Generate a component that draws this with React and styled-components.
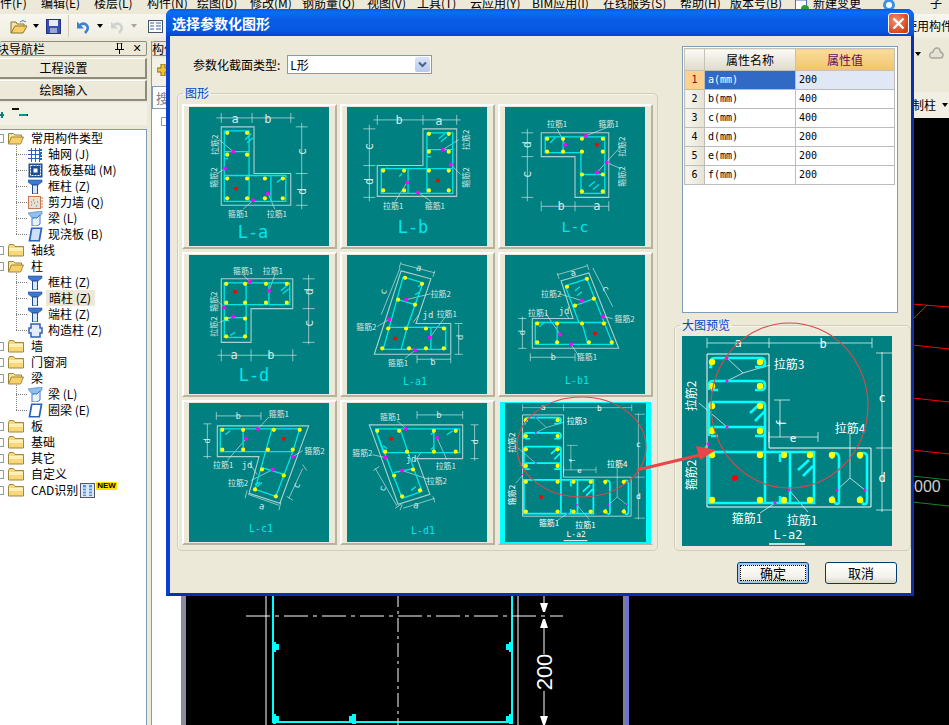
import React from "react";
import styled, { createGlobalStyle } from "styled-components";

const GlobalStyle = createGlobalStyle`
  html, body { margin: 0; padding: 0; background: #000; }
  * { box-sizing: border-box; }
`;

const cjk = `"Noto Sans CJK SC", sans-serif`;
const mono = `"DejaVu Sans Mono", "Noto Sans CJK SC", monospace`;

const Page = styled.div`
  position: relative;
  width: 949px;
  height: 725px;
  overflow: hidden;
  display: flex;
  flex-direction: column;
  background: #ece9d8;
  font: 12px/16px ${cjk};
  color: #000;
`;

/* ---------- application behind the dialog ---------- */

const MenuBar = styled.div`
  height: 14px;
  display: flex;
  overflow: hidden;
  align-items: flex-start;
  white-space: nowrap;
`;
const MenuItem = styled.span`
  flex: none;
  width: ${p => p.$w}px;
  margin-top: -5px;
`;
const MenuGlyph = styled.svg`
  margin-top: 5px;
`;
const Toolbar = styled.div`
  height: 27px;
  display: flex;
  align-items: center;
  padding: 0 0 3px 10px;
  background: linear-gradient(#f7f6ef, #f1efe3 85%, #ece9d8 90%);
`;
const ToolIcon = styled.svg`
  flex: none;
  margin-right: ${p => p.$gap || 0}px;
`;
const ToolSep = styled.i`
  width: 1px;
  height: 22px;
  background: #cfccb8;
  margin: 0 8px 0 7px;
`;
const Caret = styled.i`
  flex: none;
  width: 0;
  height: 0;
  border: 3px solid transparent;
  border-top: 4px solid ${p => p.$color || "#000"};
  border-bottom: 0;
  margin-right: ${p => p.$gap || 0}px;
`;
const ToolEnd = styled.span`
  margin-left: auto;
  margin-right: -4px;
`;
const Main = styled.div`
  flex: 1;
  display: flex;
  min-height: 0;
`;
const Nav = styled.div`
  width: 147px;
  display: flex;
  flex-direction: column;
`;
const PanelTitle = styled.div`
  height: 15px;
  display: flex;
  align-items: center;
  overflow: hidden;
  border: 1px solid #8d8b7c;
  border-left: 0;
  border-radius: 2px;
  background: #ece9d8;
  font-size: 12px;
  white-space: nowrap;
`;
const TitleText = styled.span`
  margin-left: -15px;
  flex: 1;
`;
const PinBox = styled.span`
  width: 18px;
  display: flex;
  justify-content: center;
  font: 14px/13px "Liberation Sans", sans-serif;
`;
const NavButton = styled.div`
  height: 21px;
  margin-top: ${p => p.$top}px;
  padding-right: 18px;
  border: 1px solid #8d8b7c;
  border-width: 1px 2px 2px 0;
  border-color: #fff #8d8b7c #8d8b7c #fff;
  background: #ece9d8;
  text-align: center;
  font-size: 12px;
  line-height: 18px;
`;
const TreeTools = styled.div`
  height: 22px;
  margin-top: 2px;
  display: flex;
  align-items: center;
  background: #f3f1e6;
`;
const Tree = styled.div`
  flex: 1;
  margin-top: 4px;
  background: #fff;
  border: 1px solid #7f9db9;
  border-left: 0;
  border-bottom: 0;
`;
const Row = styled.div`
  position: relative;
  height: 16px;
  display: flex;
  align-items: center;
  white-space: nowrap;
  padding-left: ${p => (p.$child ? 12 : 0)}px;
  &::before {
    content: ${p => (p.$child ? '""' : "none")};
    position: absolute;
    left: 0;
    top: 8px;
    width: 11px;
    border-top: 1px dotted #808080;
  }
`;
const Expander = styled.i`
  flex: none;
  width: 9px;
  height: 9px;
  margin: 0 4px 0 -5px;
  border: 1px solid #919b9c;
  background: #fff;
`;
const RowLabel = styled.span`
  margin-left: ${p => (p.$child ? 3 : 5)}px;
  padding: 0 ${p => (p.$selected ? 3 : 2)}px;
  width: ${p => (p.$selected ? "49px" : "auto")};
  background: ${p => (p.$selected ? "#ece9d8" : "transparent")};
`;
const Children = styled.div`
  position: relative;
  margin-left: 16px;
  &::before {
    content: "";
    position: absolute;
    left: 0;
    top: -1px;
    bottom: 8px;
    border-left: 1px dotted #808080;
  }
`;
const NewBadge = styled.span`
  margin: -9px 0 0 1px;
  height: 8px;
  padding: 0 1px;
  background: #ffe100;
  color: #000;
  font: bold 8px/8px "Liberation Sans", sans-serif;
`;
const Splitter = styled.div`
  width: 5px;
  background: #ece9d8;
  border-right: 1px solid #7f9db9;
`;
const Mid = styled.div`
  width: 29px;
  display: flex;
  flex-direction: column;
`;
const MidTop = styled.div`
  height: 28px;
  margin-top: 2px;
  padding: 5px 0 0 5px;
  background: #f3f1e6;
`;
const MidSearch = styled.div`
  height: 23px;
  border: 1px solid #7f9db9;
  background: #fff;
  color: #808080;
  padding-left: 3px;
  font-size: 13px;
  line-height: 21px;
`;
const MidTree = styled.div`
  flex: 1;
  padding: 8px 0 0 9px;
  background: #fff;
`;
const MidExpander = styled.i`
  display: block;
  width: 9px;
  height: 9px;
  border: 1px solid #919b9c;
`;
const Work = styled.div`
  flex: 1;
  display: flex;
  flex-direction: column;
  min-width: 0;
`;
const WorkRow = styled.div`
  height: ${p => p.$h}px;
  display: flex;
  align-items: center;
  justify-content: flex-end;
  background: ${p => p.$bg || "#ece9d8"};
`;
const WorkText = styled.span`
  font-size: 12px;
  margin-right: 6px;
`;
const Canvas = styled.div`
  flex: 1;
  display: flex;
  background: #000;
  border-left: 5px solid;
  border-image: linear-gradient(90deg, #8a8aa0, #6a74d0) 1;
`;
const CadSvg = styled.svg`
  display: block;
  width: 763px;
  height: 607px;
`;

/* ---------- dialog ---------- */

const Dialog = styled.div`
  position: absolute;
  left: 166px;
  top: 9px;
  width: 748px;
  height: 587px;
  display: flex;
  flex-direction: column;
  border-radius: 7px 7px 0 0;
  background: #0a4fdc;
  border: solid #0b3fd0;
  border-width: 0 3px 3px 4px;
  border-bottom-color: #0a2fa8;
  border-right-color: #0a2fa8;
`;
const TitleBar = styled.div`
  height: 27px;
  margin: 0 -3px 0 -4px;
  padding: 1px 5px 0 6px;
  display: flex;
  align-items: center;
  justify-content: space-between;
  border-radius: 7px 7px 0 0;
  background: linear-gradient(#0a58e8, #0b6cf6 12%, #0a5ce6 40%, #0658e2 80%, #0346c8);
  color: #fff;
  font: bold 14px/18px ${cjk};
`;
const CloseButton = styled.div`
  width: 21px;
  height: 21px;
  display: flex;
  align-items: center;
  justify-content: center;
  border: 1px solid #fff;
  border-radius: 3px;
  background: radial-gradient(circle at 35% 35%, #f09070, #d8481c 70%, #c03a10);
`;
const Client = styled.div`
  flex: 1;
  display: grid;
  grid-template-columns: 481px 237px;
  grid-template-rows: 505px 1fr;
  column-gap: 16px;
  padding: 10px 0 0 7px;
  background: #ece9d8;
`;
const Column = styled.div`
  display: flex;
  flex-direction: column;
  min-width: 0;
`;
const TypeRow = styled.div`
  height: 19px;
  margin-top: 9px;
  padding-left: 16px;
  display: flex;
  align-items: center;
  gap: 7px;
`;
const Combo = styled.div`
  width: 145px;
  height: 19px;
  display: flex;
  align-items: center;
  justify-content: space-between;
  padding: 1px 1px 1px 2px;
  border: 1px solid #7f9db9;
  background: #fff;
`;
const ComboArrow = styled.span`
  width: 15px;
  height: 15px;
  display: flex;
  align-items: center;
  justify-content: center;
  border-radius: 2px;
  background: linear-gradient(#dbe5fb, #b6c8ef);
`;
const Group = styled.fieldset`
  margin: ${p => p.$top}px 0 0;
  height: ${p => p.$h}px;
  min-width: 0;
  padding: 5px 0 0 ${p => p.$left}px;
  border: 1px solid #d0cebb;
  border-radius: 5px;
  box-shadow: inset 1px 1px 0 #f6f5ee;
`;
const GroupTitle = styled.legend`
  margin-left: ${p => p.$indent}px;
  padding: 0 2px;
  font-size: 12px;
  line-height: 12px;
  color: #0046d5;
`;
const TileGrid = styled.div`
  display: grid;
  grid-template-columns: repeat(3, 155px);
  grid-auto-rows: 145px;
  gap: 3px;
`;
const Tile = styled.div`
  padding: 1px 0 0 5px;
  background: ${p => (p.$selected ? "#00ffff" : "#ece9d8")};
  border: 2px solid;
  border-color: ${p =>
    p.$selected ? "#ece9d8 #ece9d8 #b5b29e #ece9d8" : "#fff #b5b29e #b5b29e #fff"};
`;
const Art = styled.svg`
  display: block;
  width: ${p => p.$w}px;
  height: ${p => p.$h}px;
  background: #008080;
`;
const PropsBox = styled.div`
  height: 267px;
  width: 216px;
  margin-left: 8px;
  padding: 1px 3px 0 1px;
  border: 1px solid #7f9db9;
  background: #fff;
`;
const PropsTable = styled.table`
  width: 210px;
  table-layout: fixed;
  border-collapse: collapse;
  font: 10px/16px ${mono};
`;
const HeadCell = styled.th`
  height: 22px;
  padding: 0;
  font: 12px/20px ${cjk};
  border: 1px solid #c4c2b4;
  color: ${p => (p.$accent ? "#660a66" : "#000")};
  background: ${p =>
    p.$accent
      ? "linear-gradient(#f9dc9c, #f1c46c)"
      : "linear-gradient(#fbfaf5, #dfdccb)"};
`;
const NumCell = styled.td`
  height: 19px;
  padding: 0;
  text-align: center;
  border: 1px solid #bcbcbc;
  color: ${p => (p.$active ? "#7a1010" : "#000")};
  background: ${p =>
    p.$active ? "#fdd08e" : "linear-gradient(90deg, #f8f7f0, #e6e3d3)"};
`;
const Cell = styled.td`
  height: 19px;
  padding: 0 0 0 3px;
  border: 1px solid #bcbcbc;
  color: ${p => (p.$fill === "#316ac5" ? "#fff" : "#000")};
  background: ${p => p.$fill || "#fff"};
`;
const Footer = styled.div`
  grid-column: 1 / 3;
  padding: 11px 14px 0 0;
  display: flex;
  justify-content: flex-end;
  gap: 16px;
`;
const Button = styled.div`
  position: relative;
  width: 72px;
  height: 22px;
  text-align: center;
  font-size: 13px;
  line-height: 20px;
  border: 1px solid #003c74;
  border-radius: 3px;
  background: linear-gradient(#ffffff, #f3f2ea 70%, #dcd8c8);
  box-shadow: ${p => (p.$primary ? "inset 0 0 0 2px #a9c4ea" : "none")};
  &::after {
    content: ${p => (p.$primary ? '""' : "none")};
    position: absolute;
    inset: 2px;
    border: 1px dotted #000;
  }
`;
const Overlay = styled.svg`
  position: absolute;
  left: 0;
  top: 0;
  width: 949px;
  height: 725px;
  pointer-events: none;
`;

/* ---------- small drawings ---------- */

const FolderClosed = () => (
  <svg width="16" height="14" viewBox="0 0 16 14">
    <path d="M.5 3.5v9.5h15V3.5H7L5.5 1.5h-4z" fill="#f8d878" stroke="#a08838" />
    <path d="M1 5h14v3H1z" fill="#fff0b8" />
  </svg>
);
const FolderOpen = () => (
  <svg width="16" height="14" viewBox="0 0 16 14">
    <path d="M.5 13V2.5h5L7 4h6.5v2" fill="#f6e2a0" stroke="#9a8438" />
    <path d="M.5 13l3-7H15.5l-3 7z" fill="#f8cf68" stroke="#a08838" />
  </svg>
);
const GridIcon = () => (
  <svg width="15" height="15" viewBox="0 0 15 15" fill="none" stroke="#2f62b4">
    <path d="M0 3.5h13M0 7.5h13M0 11.5h13M3.5 1v14M7.5 1v14M11.5 1v14" />
    <path d="M13 2v12" stroke="#2f62b4" strokeDasharray="2 1" strokeWidth="2" />
  </svg>
);
const RaftIcon = () => (
  <svg width="15" height="15" viewBox="0 0 15 15" fill="none">
    <rect x=".5" y=".5" width="14" height="14" fill="#1c4f96" />
    <rect x="2.5" y="2.5" width="10" height="10" stroke="#fff" strokeDasharray="2 1" />
    <rect x="5" y="5" width="5" height="5" fill="#fff" stroke="#1c4f96" />
  </svg>
);
const ColumnIcon = () => (
  <svg width="15" height="15" viewBox="0 0 15 15">
    <path d="M0 1h14v2l-4 3H4L0 3z" fill="#3d78d0" stroke="#1f4a98" strokeWidth=".6" />
    <path d="M4.5 6h5v9h-5z" fill="#dbe8fa" stroke="#1f4a98" />
  </svg>
);
const WallIcon = () => (
  <svg width="15" height="13" viewBox="0 0 15 13">
    <rect x=".5" y=".5" width="12" height="12" fill="#e4e0d4" stroke="#c87850" />
    <path d="M3 9h1M6 7h1M8 10h1M5 4h1M9 6h1M3 6h1" stroke="#777" />
    <path d="M14 1v11" stroke="#d07030" strokeDasharray="2 1" />
  </svg>
);
const BeamIcon = () => (
  <svg width="15" height="15" viewBox="0 0 15 15">
    <path d="M0 2l14-2v3L9 7H4z" fill="#8fc0ec" stroke="#3f78c0" strokeWidth=".6" />
    <path d="M4 7h5l3-3v9l-3 2H4z" fill="#e8f2fc" stroke="#3f78c0" />
  </svg>
);
const SlabIcon = ({ hollow }) => (
  <svg width="15" height="15" viewBox="0 0 15 15">
    <path d="M3 .5h11.5L12 14.5H.5z" fill="#2a62b8" />
    <path d="M4.5 2h8L10.5 13H2.5z" fill={hollow ? "#fff" : "#cfe0f6"} />
  </svg>
);
const ConstructIcon = () => (
  <svg width="15" height="15" viewBox="0 0 15 15">
    <path d="M3 1h9v4h2v5h-2v4H3v-4H1V5h2z" fill="#e4eefb" stroke="#2f62b4" strokeWidth="1.5" />
  </svg>
);
const CadIcon = () => (
  <svg width="15" height="15" viewBox="0 0 15 15" fill="none">
    <rect x=".5" y=".5" width="14" height="14" fill="#d8e8fb" stroke="#556" />
    <path d="M3 2v11h3V2zM9 2v11h3V2z" fill="#4f8fe0" />
    <path d="M3 5h3M3 8h3M3 11h3M9 5h3M9 8h3M9 11h3" stroke="#fff" />
  </svg>
);

const ICONS = {
  grid: <GridIcon />,
  raft: <RaftIcon />,
  column: <ColumnIcon />,
  wall: <WallIcon />,
  beam: <BeamIcon />,
  slab: <SlabIcon />,
  ring: <SlabIcon hollow />,
  construct: <ConstructIcon />,
};

const TREE = [
  { label: "常用构件类型", open: true, kids: [
    ["grid", "轴网 (J)"], ["raft", "筏板基础 (M)"], ["column", "框柱 (Z)"],
    ["wall", "剪力墙 (Q)"], ["beam", "梁 (L)"], ["slab", "现浇板 (B)"],
  ] },
  { label: "轴线" },
  { label: "柱", open: true, kids: [
    ["column", "框柱 (Z)"], ["column", "暗柱 (Z)", true], ["column", "端柱 (Z)"], ["construct", "构造柱 (Z)"],
  ] },
  { label: "墙" },
  { label: "门窗洞" },
  { label: "梁", open: true, kids: [["beam", "梁 (L)"], ["ring", "圈梁 (E)"]] },
  { label: "板" },
  { label: "基础" },
  { label: "其它" },
  { label: "自定义" },
  { label: "CAD识别", cad: true },
];

const MENU = [
  ["件(F)", 41], ["编辑(E)", 53], ["楼层(L)", 53], ["构件(N)", 50], ["绘图(D)", 53],
  ["修改(M)", 52], ["钢筋量(Q)", 65], ["视图(V)", 50], ["工具(T)", 53], ["云应用(Y)", 62],
  ["BIM应用(I)", 71], ["在线服务(S)", 77], ["帮助(H)", 50], ["版本号(B)", 65],
];

const PROPS = [["a", 200], ["b", 400], ["c", 400], ["d", 200], ["e", 200], ["f", 200]];

/* ---------- section diagrams, in each drawing's own coordinates ---------- */

const TILES = [
  {
    title: ["L-a", 64, 126, 17],
    outline: "32,20 65,20 65,67 102,67 102,99 32,99",
    rebar: "M35 24H60V95H35ZM35 45H60M35 69H97V95H60M82 69V95M56 33l6-6M58 36l6-5M88 76l6-5M35 52h4",
    dims: "M27 11H106M32 6V16M63 6V16M102 6V16M113 16V103M107 20H119M107 67H119M107 99H119M44 45L30 33M36 62L28 67M64 94L54 103M79 87L86 103",
    dots: [[38,26],[58,26],[38,48],[58,48],[38,72],[58,72],[76,72],[94,72],[38,92],[58,92],[76,92],[94,92]],
    pink: [[44,45],[36,62],[64,94],[79,87]],
    red: [47,82],
    labels: [["a",46,12,0,12],["b",79,12,0,12],["c",113,45,-90,12],["d",113,85,-90,12],["拉筋2",25,38,-90],["箍筋2",24,71,-90],["箍筋1",49,107],["拉筋1",88,107]],
  },
  {
    title: ["L-b", 66, 121, 17],
    outline: "30,59 76,59 76,22 110,22 110,90 30,90",
    rebar: "M80 26H106V87H34V62H106M80 26V87M61 62V87M80 43H106M92 32l6-5M94 35l6-5M80 50h4M55 67l-3 3M40 62v-1",
    dims: "M26 13H114M30 8V18M76 8V18M110 8V18M22 18V95M16 22H28M16 59H28M16 91H28M96 43L112 33M104 58L114 68M60 76L48 95M71 86L84 95",
    dots: [[36,64],[57,64],[36,84],[57,84],[82,27],[102,27],[82,45],[102,45],[82,64],[102,64],[82,84],[102,84]],
    pink: [[96,43],[104,58],[60,76],[71,86]],
    red: [91,74],
    labels: [["b",52,13,0,12],["a",92,14,0,12],["c",22,40,-90,12],["d",22,75,-90,12],["拉筋2",119,33,-90],["箍筋2",119,71,-90],["拉筋1",46,99],["箍筋1",88,99]],
  },
  {
    title: ["L-c", 70, 121, 15],
    outline: "36,26 104,26 104,91 70,91 70,50 36,50",
    rebar: "M40 30H100V87H76V46H40ZM58 30V46M76 68H100M45 36l5-5M84 80l6-5M88 83l6-5",
    dims: "M22 22V95M16 26H28M16 50H28M16 91H28M36 100H104M36 95V105M70 95V105M104 95V105M60 38L52 22M81 29L104 20M102 56L116 62M92 66L116 40",
    dots: [[42,32],[58,32],[77,32],[98,32],[42,45],[58,45],[77,45],[98,45],[77,68],[98,68],[77,85],[98,85]],
    pink: [[60,38],[81,29],[102,56],[92,66]],
    red: [92,38],
    labels: [["拉筋1",52,17],["箍筋1",104,17],["拉筋2",117,40,-90],["箍筋2",117,70,-90],["d",22,38,-90,12],["c",22,68,-90,12],["b",56,100,0,12],["a",92,100,0,12]],
  },
  {
    title: ["L-d", 65, 121, 17],
    outline: "32,24 104,24 104,54 62,54 62,88 32,88",
    rebar: "M35 28H101V50H35ZM35 50V83H57V28M80 28V50M35 63H57M92 36l6-5M94 39l6-5M41 81l5-3M35 66h5",
    dims: "M28 101H108M32 95V107M62 95V107M104 95V107M120 20V90M114 24H126M114 54H126M114 88H126M61 27L54 20M80 36L86 20M35 53L28 46M44 62L30 68",
    dots: [[37,29],[56,29],[77,29],[98,29],[37,48],[56,48],[77,48],[98,48],[37,64],[56,64],[37,82],[56,82]],
    pink: [[61,27],[80,36],[35,53],[44,62]],
    red: [46,37],
    labels: [["箍筋1",54,16],["拉筋1",84,16],["箍筋2",24,47,-90],["拉筋2",24,72,-90],["a",45,101,0,12],["b",82,101,0,12],["d",120,37,-90,12],["c",120,69,-90,12]],
  },
  {
    title: ["L-a1", 68, 127, 10],
    outline: "54,16 84,24 69,69 104,69 104,100 27,100",
    rebar: "M56 22L76 28L60 73H99V95H36L56 22M51 45L68 50M60 73L54 95M84 73V95M41 73H60M71 32l6-4M68 40l5-3",
    dims: "M54 9L88 18M54 7L52 13M88 16L86 22M34 60L53 13M112 70V100M108 69H116M108 100H116M70 105H104M70 101V109M104 101V109M59 45L84 39M42 65L30 72M83 83L98 63M68 96L58 104M66 68L72 60",
    dots: [[58,23],[75,29],[51,45],[68,50],[41,74],[59,74],[79,74],[97,74],[35,94],[62,94],[79,94],[97,94]],
    pink: [[59,45],[42,65],[83,83],[68,96]],
    red: [48,84],
    labels: [["a",72,13,15,9],["c",36,37,-75,9],["拉筋2",94,39],["jd",81,60,0,9],["拉筋1",100,59],["箍筋2",19,72],["d",113,83,-90,9],["箍筋1",51,108],["b",86,108,0,9]],
  },
  {
    title: ["L-b1", 72, 126, 10],
    outline: "56,26 84,18 114,94 27,94 27,64 68,64",
    rebar: "M60 31L82 24L108 90H30V68H102M60 31L74 68M70 51L89 44M52 68V90M77 68L83 90M70 36l5-4M72 41l5-4M34 72l5-4",
    dims: "M52 20L82 11M52 18L54 24M82 9L84 15M88 13L108 52M17 62V94M13 64H21M13 94H21M25 103H70M25 99V107M70 99V107M54 39L77 46M40 58L55 80M66 90L74 102M98 62L108 64M60 58L64 64",
    dots: [[62,32],[82,24],[70,51],[89,44],[32,69],[52,69],[77,69],[99,69],[32,88],[52,88],[84,88],[107,88]],
    pink: [[77,46],[98,62],[55,80],[66,90]],
    red: [90,79],
    labels: [["a",68,18,-15,9],["c",101,34,65,9],["拉筋2",46,39],["jd",59,56,0,9],["拉筋1",33,58],["箍筋2",120,64],["d",17,78,-90,9],["b",48,103,0,9],["箍筋1",82,102]],
  },
  {
    title: ["L-c1", 72, 126, 10],
    outline: "28,23 120,23 91,101 60,91 70,54 28,54",
    rebar: "M31 26H111L104 49H31ZM104 49L87 94M83 26L66 87L87 94M73 65L95 72M54 26V49M36 32l5-4M68 84l5-4M66 82l5-2",
    dims: "M27 13H72M27 9V17M72 9V17M18 21V56M14 21H22M14 54H22M59 92L90 103M58 88L56 96M92 100L90 108M114 66L100 96M114 62L118 68M98 94L104 98M57 36L38 58M69 26L80 14M104 54L114 48M84 67L62 78M60 60L68 72",
    dots: [[33,27],[54,27],[85,27],[111,27],[33,47],[54,47],[79,47],[104,47],[73,67],[95,73],[66,87],[87,94]],
    pink: [[69,26],[57,36],[104,54],[84,67]],
    red: [95,36],
    labels: [["b",49,13,0,9],["箍筋1",90,11],["d",18,38,-90,9],["拉筋1",34,62],["jd",58,62,0,9],["箍筋2",126,48],["拉筋2",49,80],["c",108,83,-70,9],["a",73,104,15,9]],
  },
  {
    title: ["L-d1", 76, 128, 10],
    outline: "22,22 116,22 116,56 70,56 83,92 51,102",
    rebar: "M28 26H113V50H36L28 26M28 26L55 96L75 89L61 50M53 26L61 50M87 26V50M47 70L66 66M36 43l4 3M64 88l5-4M100 32l6-4M84 32l3-3M84 47l3-3",
    dims: "M70 12H116M70 8V16M116 8V16M128 22V58M124 22H132M124 56H132M28 66L50 104M26 68L32 64M48 106L54 102M56 106L88 96M55 102L53 108M86 94L88 100M59 26L50 18M90 35L100 57M38 55L25 52M55 68L82 77M68 58L74 50",
    dots: [[30,28],[52,28],[87,28],[109,28],[38,49],[60,49],[87,49],[109,49],[47,73],[66,67],[55,94],[73,88]],
    pink: [[59,26],[90,35],[38,55],[55,68]],
    red: [44,36],
    labels: [["箍筋1",43,14],["b",92,12,0,9],["d",128,39,-90,9],["箍筋2",15,50],["jd",64,56,0,9],["拉筋1",99,63],["拉筋2",90,78],["c",35,86,-70,9],["a",69,103,15,9]],
  },
];

const LARGE = {
  box: 210,
  title: ["L-a2", 106, 199, 12],
  outline: "25,18 87,18 87,112 189,112 189,171 25,171",
  rebarWidth: 2.6,
  dotR: 3.2,
  pinkR: 1.5,
  rebar: "M27 31H29V25Q29 22 33 22H79Q83 22 83 27Q83 31 79 31H73M27 54V49Q27 45 31 45H79Q83 45 83 50Q83 54 79 54H73M29 54H36M27 100V70Q27 66 31 66H79Q83 66 83 70V167M27 100Q27 91 31 91H79Q83 91 83 96Q83 100 79 100H73M29 100H36M27 116H132V167H27ZM108 116V167M98 126V118M98 160V167M116 134L127 124M121 140L131 130M68 77L79 67M73 85L83 75M150 123V120Q150 117 153 117Q156 117 157 121V166Q157 169 153 167L150 160M178 123V120Q178 117 181 117Q185 117 185 121V164Q185 169 181 168L178 160",
  rebarColor: "#00ffff",
  dims: "M25 7H190M25 2V12M87 2V12M190 2V12M200 16V176M194 17H210M194 112H210M194 174H210M98 64V101M92 64H108M87 101H136M87 96V106M136 96V106M45 22L61 37L45 45M61 37L88 29M17 67L45 91M15 121L26 108M168 97V142L155 154M168 142L183 154M93 167L78 177M107 154L126 176",
  dimColor: "#ffffff",
  dots: [30,78].flatMap(x => [26,50,70,95,119,164].map(y => [x,y])).concat([102,128,150,178].flatMap(x => [119,164].map(y => [x,y]))),
  pink: [[45,22],[45,45],[45,91],[26,108],[93,167],[107,154],[155,154],[183,154]],
  red: [53,142],
  redR: 3,
  labels: [["a",56,7,0,12],["b",141,8,0,12],["c",200,62,0,12],["d",200,142,0,12],["f",100,87,-90,12],["e",111,102,0,11],["拉筋3",107,27,0,12],["拉筋2",8,60,-90,12],["箍筋2",8,139,-90,12],["拉筋4",168,91,0,12],["箍筋1",65,181,0,12],["拉筋1",120,183,0,12]],
  labelColor: "#ffffff",
  underline: "M87 208H123",
};

const Diagram = ({ data, width, height }) => {
  const box = data.box || 140;
  const labelFill = data.labelColor || "#d7e9e7";
  const [name, tx, ty, tsize] = data.title;
  return (
    <Art $w={width} $h={height} viewBox={`0 0 ${box} ${box}`}>
      <polygon points={data.outline} fill="none" stroke={data.box ? "#fff" : "#a8d2d0"} strokeWidth={data.box ? 1 : 1.1} />
      <path d={data.dims} fill="none" stroke={data.dimColor || "#c9e3e1"} strokeWidth=".7" />
      <path d={data.rebar} fill="none" stroke={data.rebarColor || "#00e6e6"} strokeWidth={data.rebarWidth || 1.3} />
      {data.dots.map(([x, y]) => (
        <circle key={`${x}-${y}`} cx={x} cy={y} r={data.dotR || 2.1} fill="#ffff00" />
      ))}
      {data.pink.map(([x, y]) => (
        <circle key={`${x}-${y}`} cx={x} cy={y} r={data.pinkR || 2} fill="#ff00ff" />
      ))}
      <circle cx={data.red[0]} cy={data.red[1]} r={data.redR || 2} fill="#ff0000" />
      {data.labels.map(([text, x, y, rot = 0, size = 8]) => (
        <text
          key={`${text}-${x}`}
          x={x}
          y={y}
          fill={labelFill}
          fontSize={size}
          fontFamily={size > 8 && text.length < 3 ? mono : cjk}
          textAnchor="middle"
          dominantBaseline="central"
          transform={rot ? `rotate(${rot} ${x} ${y})` : undefined}
        >
          {text}
        </text>
      ))}
      <text
        x={tx}
        y={ty}
        fill={data.box ? "#fff" : "#00e6ee"}
        fontSize={tsize}
        fontFamily={mono}
        textAnchor="middle"
        dominantBaseline="central"
      >
        {name}
      </text>
      {data.underline && <path d={data.underline} stroke="#fff" strokeWidth="1.6" />}
    </Art>
  );
};

const SaveIcon = () => (
  <ToolIcon width="15" height="15" viewBox="0 0 15 15">
    <rect x=".5" y=".5" width="14" height="14" fill="#3a50b0" stroke="#223080" />
    <rect x="3" y="1" width="9" height="6" fill="#e8ecf8" />
    <rect x="4" y="9" width="7" height="5" fill="#9aa8d8" />
  </ToolIcon>
);
const Undo = ({ color }) => (
  <ToolIcon width="14" height="15" viewBox="0 0 14 15" $gap={6}>
    <path d="M8 14Q13 9 9 5.5Q6 3.5 3 6" fill="none" stroke={color} strokeWidth="2.6" />
    <path d="M0 2.5V9.5H7z" fill={color} />
  </ToolIcon>
);

export default function App() {
  return (
    <Page>
      <GlobalStyle />
      <MenuBar>
        {MENU.map(([text, w]) => (
          <MenuItem key={text} $w={w}>{text}</MenuItem>
        ))}
        <MenuItem $w={18}>
          <MenuGlyph width="14" height="14" viewBox="0 0 14 14">
            <rect x=".5" y="0" width="11" height="13" fill="#fff" stroke="#4a6cb0" />
            <circle cx="10" cy="9" r="4" fill="#2ca02c" />
          </MenuGlyph>
        </MenuItem>
        <MenuItem $w={69}>新建变更</MenuItem>
        <MenuItem $w={48}>
          <MenuGlyph width="15" height="14" viewBox="0 0 15 14">
            <circle cx="7" cy="5" r="6" fill="#3d8fe0" />
            <circle cx="7" cy="5" r="3" fill="#fff" />
          </MenuGlyph>
        </MenuItem>
        <MenuItem $w={20}>子</MenuItem>
      </MenuBar>
      <Toolbar>
        <ToolIcon width="18" height="15" viewBox="0 0 18 15" $gap={5}>
          <path d="M1 14V3h5l1 2h7v2" fill="#f6e2a0" stroke="#8a7430" />
          <path d="M1 14l4-7h12l-4 7z" fill="#f8cf68" stroke="#8a7430" />
          <path d="M10 3Q13 0 16 3" fill="none" stroke="#3a7ac0" />
        </ToolIcon>
        <Caret $gap={7} />
        <SaveIcon />
        <ToolSep />
        <Undo color="#3d7fd0" />
        <Caret $gap={8} />
        <Undo color="#cfd3cf" />
        <Caret $color="#a8a8a0" $gap={11} />
        <ToolIcon width="15" height="13" viewBox="0 0 15 13">
          <rect x=".5" y=".5" width="14" height="12" fill="#fff" stroke="#456" />
          <path d="M2 3h4M2 6h4M2 9h4M8 3h5M8 6h5M8 9h5" stroke="#3d5fa8" />
        </ToolIcon>
        <ToolEnd>使用构件</ToolEnd>
      </Toolbar>
      <Main>
        <Nav>
          <PanelTitle>
            <TitleText>模块导航栏</TitleText>
            <PinBox>
              <svg width="9" height="11" viewBox="0 0 9 11">
                <path d="M2.500 0v6M6.500 0v6M0 6.500h9M1.500 0h6M4.500 7v4" fill="none" stroke="#000" />
              </svg>
            </PinBox>
            <PinBox>×</PinBox>
          </PanelTitle>
          <NavButton $top={2}>工程设置</NavButton>
          <NavButton $top={1}>绘图输入</NavButton>
          <TreeTools>
            <svg width="30" height="14" viewBox="0 0 30 14">
              <path d="M0 8h4M2 5v6" stroke="#0b7f7f" strokeWidth="2" />
              <path d="M12 2h7M20 8h8" stroke="#111" strokeWidth="2" />
              <path d="M19 8h8" stroke="#0b9090" strokeWidth="2" />
            </svg>
          </TreeTools>
          <Tree>
            {TREE.map(node => (
              <React.Fragment key={node.label}>
                <Row>
                  <Expander />
                  {node.open ? <FolderOpen /> : <FolderClosed />}
                  <RowLabel>{node.label}</RowLabel>
                  {node.cad && <CadIcon />}
                  {node.cad && <NewBadge>NEW</NewBadge>}
                </Row>
                {node.kids && (
                  <Children>
                    {node.kids.map(([icon, text, selected]) => (
                      <Row $child key={text + icon}>
                        {ICONS[icon]}
                        <RowLabel $child $selected={selected}>{text}</RowLabel>
                      </Row>
                    ))}
                  </Children>
                )}
              </React.Fragment>
            ))}
          </Tree>
        </Nav>
        <Splitter />
        <Mid>
          <PanelTitle>构件列表</PanelTitle>
          <MidTop>
            <svg width="12" height="12" viewBox="0 0 12 12">
              <path d="M4 0h4v4h4v4H8v4H4V8H0V4h4z" fill="#f2c230" stroke="#8a6a10" />
            </svg>
          </MidTop>
          <MidSearch>搜索</MidSearch>
          <MidTree>
            <MidExpander />
          </MidTree>
        </Mid>
        <Work>
          <WorkRow $h={25}>
            <Caret $gap={8} />
            <ToolIcon width="15" height="13" viewBox="0 0 15 13" $gap={5}>
              <path d="M3 11Q0 11 1 7Q2 5 4 5Q5 1 8 1Q11 1 11.500 5Q14.500 6 14 9Q13.500 11 11 11z" fill="#e4e2d4" stroke="#a8a698" strokeWidth="1.4" />
            </ToolIcon>
          </WorkRow>
          <WorkRow $h={26} />
          <WorkRow $h={26} $bg="#f1efe4">
            <WorkText>制柱</WorkText>
            <Caret $gap={1} />
          </WorkRow>
          <Canvas>
            <CadSvg viewBox="186 118 763 607">
              <path d="M266 118V725M518 118V725" stroke="#fff" />
              <path d="M273 118V722H512V118" fill="none" stroke="#00ffff" strokeWidth="2" />
              <path d="M506 644h3v-2h4v10h-4v-2h-3zM506 716h3v-2h4v10h-4v-2h-3zM279 644h-3v-2h-3v10h3v-2h3zM279 716h-3v-2h-3v10h3v-2h3zM349 716h3v-2h4v10h-4v-2h-3z" fill="#00ffff" />
              <path d="M246 616H563" stroke="#fff" strokeDasharray="24 5 4 5" />
              <path d="M398 118V725" stroke="#fff" strokeDasharray="14 4 3 4" />
              <path d="M544 596V603M544 628V654M544 691V716" stroke="#fff" />
              <path d="M540 603h8l-3 9h-2zM540 628h8l-3-9h-2zM540 716h8l-3 9h-2z" fill="#fff" />
              <text x="544" y="672" fill="#fff" fontSize="22" fontFamily="Liberation Sans, sans-serif" textAnchor="middle" dominantBaseline="central" transform="rotate(-90 544 672)">200</text>
              <path d="M624 118V725" stroke="#7f7f90" strokeWidth="2" />
              <path d="M627 118V725" stroke="#6a74d0" strokeWidth="4" />
              <g fill="none" stroke="#ff0000">
                <path d="M912 304L949 307M912 345L949 349M912 398L949 402M912 450L949 454M927 305L914 318" />
              </g>
              <path d="M912 476L949 480M912 502L949 506" fill="none" stroke="#0c8a1c" />
              <text x="914" y="486" fill="#cfcfcf" fontSize="16" fontFamily="Liberation Sans, sans-serif" dominantBaseline="central">000</text>
            </CadSvg>
          </Canvas>
        </Work>
      </Main>

      <Dialog>
        <TitleBar>
          选择参数化图形
          <CloseButton>
            <svg width="13" height="13" viewBox="0 0 13 13">
              <path d="M1.500 1.500L11.500 11.500M11.500 1.500L1.500 11.500" stroke="#fff" strokeWidth="2.400" />
            </svg>
          </CloseButton>
        </TitleBar>
        <Client>
          <Column>
            <TypeRow>
              参数化截面类型:
              <Combo>
                L形
                <ComboArrow>
                  <svg width="9" height="7" viewBox="0 0 9 7">
                    <path d="M1 1.500L4.500 5L8 1.500" fill="none" stroke="#4d6185" strokeWidth="2" />
                  </svg>
                </ComboArrow>
              </Combo>
            </TypeRow>
            <Group $top={13} $h={464} $left={4}>
              <GroupTitle $indent={1}>图形</GroupTitle>
              <TileGrid>
                {TILES.map(tile => (
                  <Tile key={tile.title[0]}>
                    <Diagram data={tile} width={140} height={139} />
                  </Tile>
                ))}
                <Tile $selected>
                  <Diagram data={LARGE} width={141} height={139} />
                </Tile>
              </TileGrid>
            </Group>
          </Column>
          <Column>
            <PropsBox>
              <PropsTable>
                <colgroup>
                  <col width="20" />
                  <col width="91" />
                  <col width="99" />
                </colgroup>
                <thead>
                  <tr>
                    <HeadCell />
                    <HeadCell>属性名称</HeadCell>
                    <HeadCell $accent>属性值</HeadCell>
                  </tr>
                </thead>
                <tbody>
                  {PROPS.map(([name, value], i) => (
                    <tr key={name}>
                      <NumCell $active={i === 0}>{i + 1}</NumCell>
                      <Cell $fill={i === 0 ? "#316ac5" : undefined}>{name}(mm)</Cell>
                      <Cell $fill={i === 0 ? "#dfe8f4" : undefined}>{value}</Cell>
                    </tr>
                  ))}
                </tbody>
              </PropsTable>
            </PropsBox>
            <Group $top={6} $h={232} $left={7}>
              <GroupTitle $indent={-2}>大图预览</GroupTitle>
              <Diagram data={LARGE} width={210} height={210} />
            </Group>
          </Column>
          <Footer>
            <Button $primary>确定</Button>
            <Button>取消</Button>
          </Footer>
        </Client>
      </Dialog>

      {/* red marks someone drew on top of the screenshot */}
      <Overlay viewBox="0 0 949 725">
        <ellipse cx="581.500" cy="447" rx="64.500" ry="50" fill="none" stroke="#d9484a" strokeWidth="1.200" />
        <ellipse cx="789.500" cy="405.500" rx="78.500" ry="82.500" fill="none" stroke="#d9484a" strokeWidth="1.200" />
        <path d="M637 470L700 455" stroke="#e8474a" strokeWidth="3" />
        <path d="M716 450L696 446L700 460z" fill="#e8474a" />
      </Overlay>
    </Page>
  );
}
